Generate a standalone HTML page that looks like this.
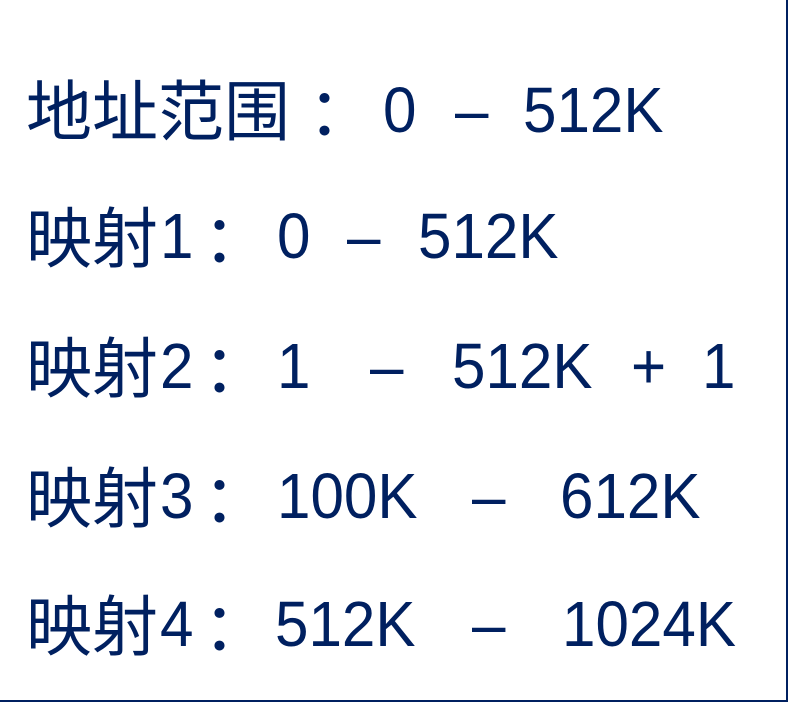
<!DOCTYPE html>
<html><head><meta charset="utf-8"><style>
html,body{margin:0;padding:0;background:#fff;}
body{width:789px;height:703px;position:relative;overflow:hidden;}
.frame{position:absolute;left:-2px;top:-2px;width:790px;height:704px;border:2px solid #002060;box-sizing:border-box;}
.s{position:absolute;color:#002060;white-space:pre;line-height:80px;height:80px;}
.c{font-family:"Noto Sans CJK SC","WenQuanYi Zen Hei",sans-serif;font-size:66px;}
.d{font-family:"Liberation Sans",sans-serif;font-size:64px;transform-origin:left center;transform:scaleX(0.94);}
</style></head><body>
<div class="frame"></div>

<div class="s c" style="left:26px;top:67px">地址范围</div>
<div class="s c" style="left:308px;top:67px">：</div>
<div class="s d" style="left:383px;top:70px">0</div>
<div class="s d" style="left:455px;top:70px">–</div>
<div class="s d" style="left:523px;top:70px">512K</div>

<div class="s c" style="left:26px;top:194px">映射</div>
<div class="s d" style="left:160px;top:196px">1</div>
<div class="s c" style="left:203px;top:194px">：</div>
<div class="s d" style="left:277px;top:196px">0</div>
<div class="s d" style="left:347px;top:196px">–</div>
<div class="s d" style="left:418px;top:196px">512K</div>

<div class="s c" style="left:26px;top:324px">映射</div>
<div class="s d" style="left:160px;top:326px">2</div>
<div class="s c" style="left:203px;top:324px">：</div>
<div class="s d" style="left:277px;top:326px">1</div>
<div class="s d" style="left:370px;top:326px">–</div>
<div class="s d" style="left:452px;top:326px">512K</div>
<div class="s d" style="left:631px;top:326px">+</div>
<div class="s d" style="left:702px;top:326px">1</div>

<div class="s c" style="left:26px;top:454px">映射</div>
<div class="s d" style="left:160px;top:456px">3</div>
<div class="s c" style="left:203px;top:454px">：</div>
<div class="s d" style="left:277px;top:456px">100K</div>
<div class="s d" style="left:472px;top:456px">–</div>
<div class="s d" style="left:560px;top:456px">612K</div>

<div class="s c" style="left:26px;top:582px">映射</div>
<div class="s d" style="left:160px;top:584px">4</div>
<div class="s c" style="left:203px;top:582px">：</div>
<div class="s d" style="left:275px;top:584px">512K</div>
<div class="s d" style="left:472px;top:584px">–</div>
<div class="s d" style="left:562px;top:584px">1024K</div>
</body></html>
